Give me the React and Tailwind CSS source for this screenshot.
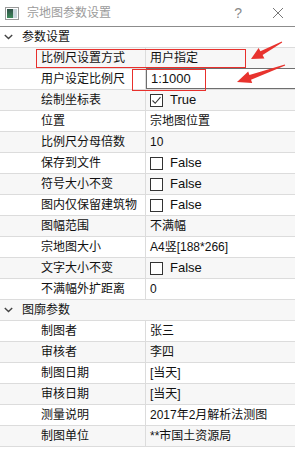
import React from 'react';

const font = { fontFamily: '"Liberation Sans", "Noto Sans CJK SC", sans-serif' };

const groups = [
  {
    title: '参数设置',
    rows: [
      { label: '比例尺设置方式', value: '用户指定' },
      { label: '用户设定比例尺', value: '1:1000', editor: true },
      { label: '绘制坐标表', check: true, value: 'True' },
      { label: '位置', value: '宗地图位置' },
      { label: '比例尺分母倍数', value: '10' },
      { label: '保存到文件', check: false, value: 'False' },
      { label: '符号大小不变', check: false, value: 'False' },
      { label: '图内仅保留建筑物', check: false, value: 'False' },
      { label: '图幅范围', value: '不满幅' },
      { label: '宗地图大小', value: 'A4竖[188*266]' },
      { label: '文字大小不变', check: false, value: 'False' },
      { label: '不满幅外扩距离', value: '0' },
    ],
  },
  {
    title: '图廓参数',
    rows: [
      { label: '制图者', value: '张三' },
      { label: '审核者', value: '李四' },
      { label: '制图日期', value: '[当天]' },
      { label: '审核日期', value: '[当天]' },
      { label: '测量说明', value: '2017年2月解析法测图' },
      { label: '制图单位', value: '**市国土资源局' },
    ],
  },
];

const CheckBox = ({ checked }) => (
  <span className="w-[13px] h-[13px] border border-[#333] bg-white flex items-center justify-center mr-[7px]">
    {checked && (
      <svg width="11" height="11" viewBox="0 0 11 11">
        <path d="M1.5 5.5 L4.2 8.3 L9.5 2.2" fill="none" stroke="#333" strokeWidth="1.1" />
      </svg>
    )}
  </span>
);

const Chevron = () => (
  <svg width="9" height="6" viewBox="0 0 9 6" className="ml-[4px] mr-[9px]">
    <path d="M0.8 1 L4.5 4.6 L8.2 1" fill="none" stroke="#444" strokeWidth="1.4" />
  </svg>
);

export default function App() {
  let idx = 0;
  const rowBg = () => (idx++ % 2 === 1 ? 'bg-[#f7f7f7]' : 'bg-white');

  return (
    <div className="relative w-[295px] h-[471px] bg-white overflow-hidden text-[12px] text-[#111]" style={font}>
      {/* title bar */}
      <div className="h-[27px] flex items-center border-b border-[#8c8c8c]">
        <div className="ml-[5px] w-[14px] h-[13px] border border-[#9a9a9a] bg-white p-[1px] flex">
          <div className="w-[6px] h-full bg-gradient-to-b from-[#2f4f46] to-[#3c8a5a]" />
          <div className="flex-1 bg-[#c9d6dc]" />
        </div>
        <span className="ml-[8px] text-[12px] text-[#9b9b9b]">宗地图参数设置</span>
        <span className="ml-auto text-[14px] text-[#8a8a8a] mr-[30px]">?</span>
        <svg width="12" height="12" viewBox="0 0 12 12" className="mr-[11px]">
          <path d="M1 1 L11 11 M11 1 L1 11" stroke="#777" strokeWidth="1" />
        </svg>
      </div>

      {groups.map((g) => (
        <div key={g.title}>
          <div className={`h-[21px] flex items-center border-b border-[#dcdcdc] ${rowBg()}`}>
            <Chevron />
            <span>{g.title}</span>
          </div>
          {g.rows.map((r) => (
            <div key={r.label} className={`h-[21px] flex border-b border-[#dcdcdc] ${rowBg()}`}>
              <div className="w-[146px] shrink-0 flex items-center pl-[41px] border-r border-[#dcdcdc]">
                {r.label}
              </div>
              {r.editor ? (
                <div className="flex-1 flex items-center pl-[4px] bg-white border border-[#6e6e6e] border-r-0 -mt-[1px] text-[13px]">
                  {r.value}
                </div>
              ) : (
                <div className="flex-1 flex items-center pl-[4px]">
                  {r.check !== undefined && <CheckBox checked={r.check} />}
                  <span className={r.check !== undefined ? 'text-[13px]' : ''}>{r.value}</span>
                </div>
              )}
            </div>
          ))}
        </div>
      ))}

      {/* annotation overlays */}
      <div className="absolute left-[36px] top-[49px] w-[210px] h-[19px] border-[1.5px] border-[#e8302c]" />
      <div className="absolute left-[132px] top-[69px] w-[74px] h-[22px] border-[1.5px] border-[#e8302c]" />
      <svg className="absolute left-0 top-0" width="295" height="471" viewBox="0 0 295 471">
        <polygon points="251,59 264.4,58.5 262.6,55.1 282.2,42.4 281.8,41.6 260.4,51.3 258.6,47.9" fill="#e8332e" />
        <polygon points="237,82 252.2,83 251,79.7 285.2,65.5 284.8,64.5 249.4,75 248.2,71.6" fill="#e8332e" />
      </svg>
    </div>
  );
}
